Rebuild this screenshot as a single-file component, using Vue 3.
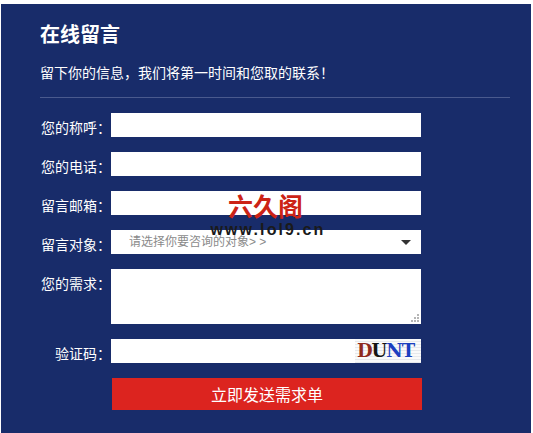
<script setup>
import { ref } from "vue";

const fields = [
  { label: "您的称呼：", type: "input" },
  { label: "您的电话：", type: "input" },
  { label: "留言邮箱：", type: "input" },
];

const target = ref("");
</script>

<template>
  <div class="page">
    <div class="panel">
      <h2 class="title">在线留言</h2>
      <p class="intro">留下你的信息，我们将第一时间和您取的联系！</p>
      <div class="line"></div>

      <form class="form" @submit.prevent>
        <label v-for="f in fields" :key="f.label" class="row">
          <span class="label">{{ f.label }}</span>
          <input class="field" type="text" />
        </label>

        <label class="row">
          <span class="label">留言对象：</span>
          <div class="select-wrap">
            <select v-model="target" class="field select">
              <option value="">请选择你要咨询的对象> ></option>
            </select>
            <i class="arrow"></i>
          </div>
        </label>

        <label class="row row-top">
          <span class="label">您的需求：</span>
          <div class="area-wrap">
            <textarea class="field area"></textarea>
            <svg class="grip" width="9" height="9" viewBox="0 0 9 9">
              <rect x="6" y="0" width="2" height="2" />
              <rect x="3" y="3" width="2" height="2" />
              <rect x="6" y="3" width="2" height="2" />
              <rect x="0" y="6" width="2" height="2" />
              <rect x="3" y="6" width="2" height="2" />
              <rect x="6" y="6" width="2" height="2" />
            </svg>
          </div>
        </label>

        <label class="row">
          <span class="label">验证码：</span>
          <div class="code-wrap">
            <input class="field" type="text" />
            <div class="captcha">
              <span class="c1">D</span><span class="c2">U</span><span class="c3">N</span><span class="c3">T</span>
            </div>
          </div>
        </label>

        <button class="submit" type="submit">立即发送需求单</button>
      </form>

      <div class="mark">
        <div class="mark-name">六久阁</div>
        <div class="mark-url">www.lol9.cn</div>
      </div>
    </div>
  </div>
</template>

<style>
html,
body {
  margin: 0;
  background: #fff;
}
</style>

<style scoped>
.page {
  width: 533px;
  height: 433px;
  padding: 4px 2px 0 1px;
  box-sizing: border-box;
  overflow: hidden;
  font-family: "Liberation Sans", "Noto Sans CJK SC", sans-serif;
}

.panel {
  position: relative;
  height: 429px;
  background: #182c6a;
  padding: 17px 21px 0 39px;
  box-sizing: border-box;
  color: #fff;
}

.title {
  margin: 0;
  font-size: 20px;
  line-height: 28px;
  font-weight: bold;
}

.intro {
  margin: 14px 0 0;
  font-size: 14px;
  line-height: 20px;
}

.line {
  height: 1px;
  margin-top: 14px;
  background: #4a5a8e;
}

.form {
  display: flex;
  flex-direction: column;
  gap: 15px;
  margin-top: 15px;
}

.row {
  display: flex;
  align-items: flex-start;
  height: 24px;
}

.row-top {
  height: 55px;
}

.label {
  flex: none;
  width: 71px;
  padding-top: 3px;
  font-size: 14px;
  line-height: 24px;
  text-align: right;
  white-space: nowrap;
}

.field {
  display: block;
  width: 310px;
  height: 24px;
  margin: 0;
  padding: 0 6px;
  border: 0;
  border-radius: 0;
  box-sizing: border-box;
  background: #fff;
  outline: none;
}

.select-wrap,
.code-wrap,
.area-wrap {
  position: relative;
  width: 310px;
  height: 24px;
}

.area-wrap {
  height: 55px;
}

.select {
  padding-left: 18px;
  appearance: none;
  color: #8a8a8a;
  font-family: inherit;
  font-size: 12px;
}

.arrow {
  position: absolute;
  right: 10px;
  top: 10px;
  border-style: solid;
  border-width: 5px 5px 0;
  border-color: #333 transparent transparent;
}

.area {
  height: 55px;
  padding: 6px;
  resize: none;
}

.grip {
  position: absolute;
  right: 1px;
  bottom: 1px;
  fill: #b5b5b5;
}

.captcha {
  position: absolute;
  right: 0;
  top: 0;
  width: 66px;
  height: 24px;
  box-sizing: border-box;
  padding-left: 2px;
  background: repeating-linear-gradient(0deg, #e6e8ec 0 1px, #fafafa 1px 3px);
  font-family: "DejaVu Serif", serif;
  font-size: 18px;
  font-weight: bold;
  line-height: 24px;
  letter-spacing: -1px;
  white-space: nowrap;
}

.c1 {
  color: #8f2a1e;
}

.c2 {
  color: #151515;
}

.c3 {
  color: #1c3fc0;
}

.submit {
  display: block;
  width: 310px;
  height: 32px;
  margin: 0 0 0 72px;
  border: 0;
  background: #dc241f;
  color: #fff;
  font-family: inherit;
  font-size: 16px;
  cursor: pointer;
}

.mark {
  position: absolute;
  left: 209px;
  top: 189px;
  width: 116px;
  text-align: center;
  pointer-events: none;
}

.mark-name {
  padding-right: 5px;
  color: #cc2316;
  font-size: 25px;
  font-weight: bold;
  line-height: 29px;
}

.mark-url {
  color: #1a1a1a;
  font-size: 16px;
  font-weight: bold;
  line-height: 16px;
  letter-spacing: 2.1px;
  white-space: nowrap;
}
</style>
